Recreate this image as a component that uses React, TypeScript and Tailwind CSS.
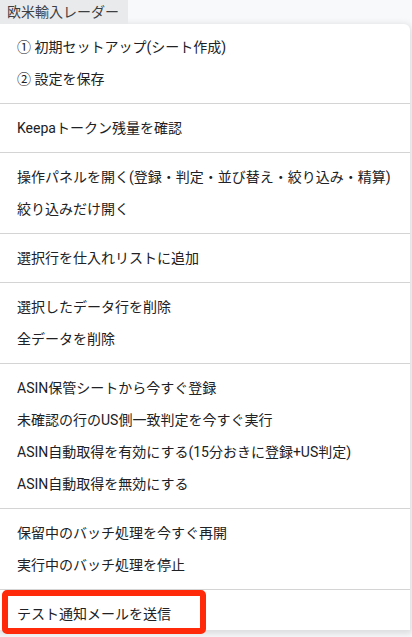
import React from "react";

const sections: string[][] = [
  ["① 初期セットアップ(シート作成)", "② 設定を保存"],
  ["Keepaトークン残量を確認"],
  ["操作パネルを開く(登録・判定・並び替え・絞り込み・精算)", "絞り込みだけ開く"],
  ["選択行を仕入れリストに追加"],
  ["選択したデータ行を削除", "全データを削除"],
  [
    "ASIN保管シートから今すぐ登録",
    "未確認の行のUS側一致判定を今すぐ実行",
    "ASIN自動取得を有効にする(15分おきに登録+US判定)",
    "ASIN自動取得を無効にする",
  ],
  ["保留中のバッチ処理を今すぐ再開", "実行中のバッチ処理を停止"],
  ["テスト通知メールを送信"],
];

const App = () => {
  return (
    <div
      className="h-[637px] w-[412px] overflow-hidden bg-[#f8f9fa] text-[#202124]"
      style={{ fontFamily: "Roboto, 'Noto Sans CJK JP', sans-serif" }}
    >
      {/* Menu bar */}
      <div className="flex h-6">
        <div className="flex w-[128px] items-center bg-[#e9eaec] pl-[7px] text-[14px] text-[#3c4043]">
          欧米輸入レーダー
        </div>
      </div>

      {/* Dropdown */}
      <div className="w-[410px] rounded-tr-[6px] bg-white pt-[7px] shadow-[0_2px_6px_2px_rgba(60,64,67,0.15)]">
        {sections.map((items, i) => (
          <div key={i}>
            {i > 0 && <div className="my-2 h-px bg-[#d4d4d4]" />}
            {items.map((label, j) => {
              const last = i === sections.length - 1;
              return (
                <div key={j} className="relative flex h-8 items-center pl-[17px] text-[14px] whitespace-nowrap">
                  {label}
                  {last && (
                    <div className="absolute -top-2 left-[2px] h-[44px] w-[204px] rounded-[5px] border-[6px] border-[#ff2a0a]" />
                  )}
                </div>
              );
            })}
          </div>
        ))}
      </div>
    </div>
  );
};

export default App;
